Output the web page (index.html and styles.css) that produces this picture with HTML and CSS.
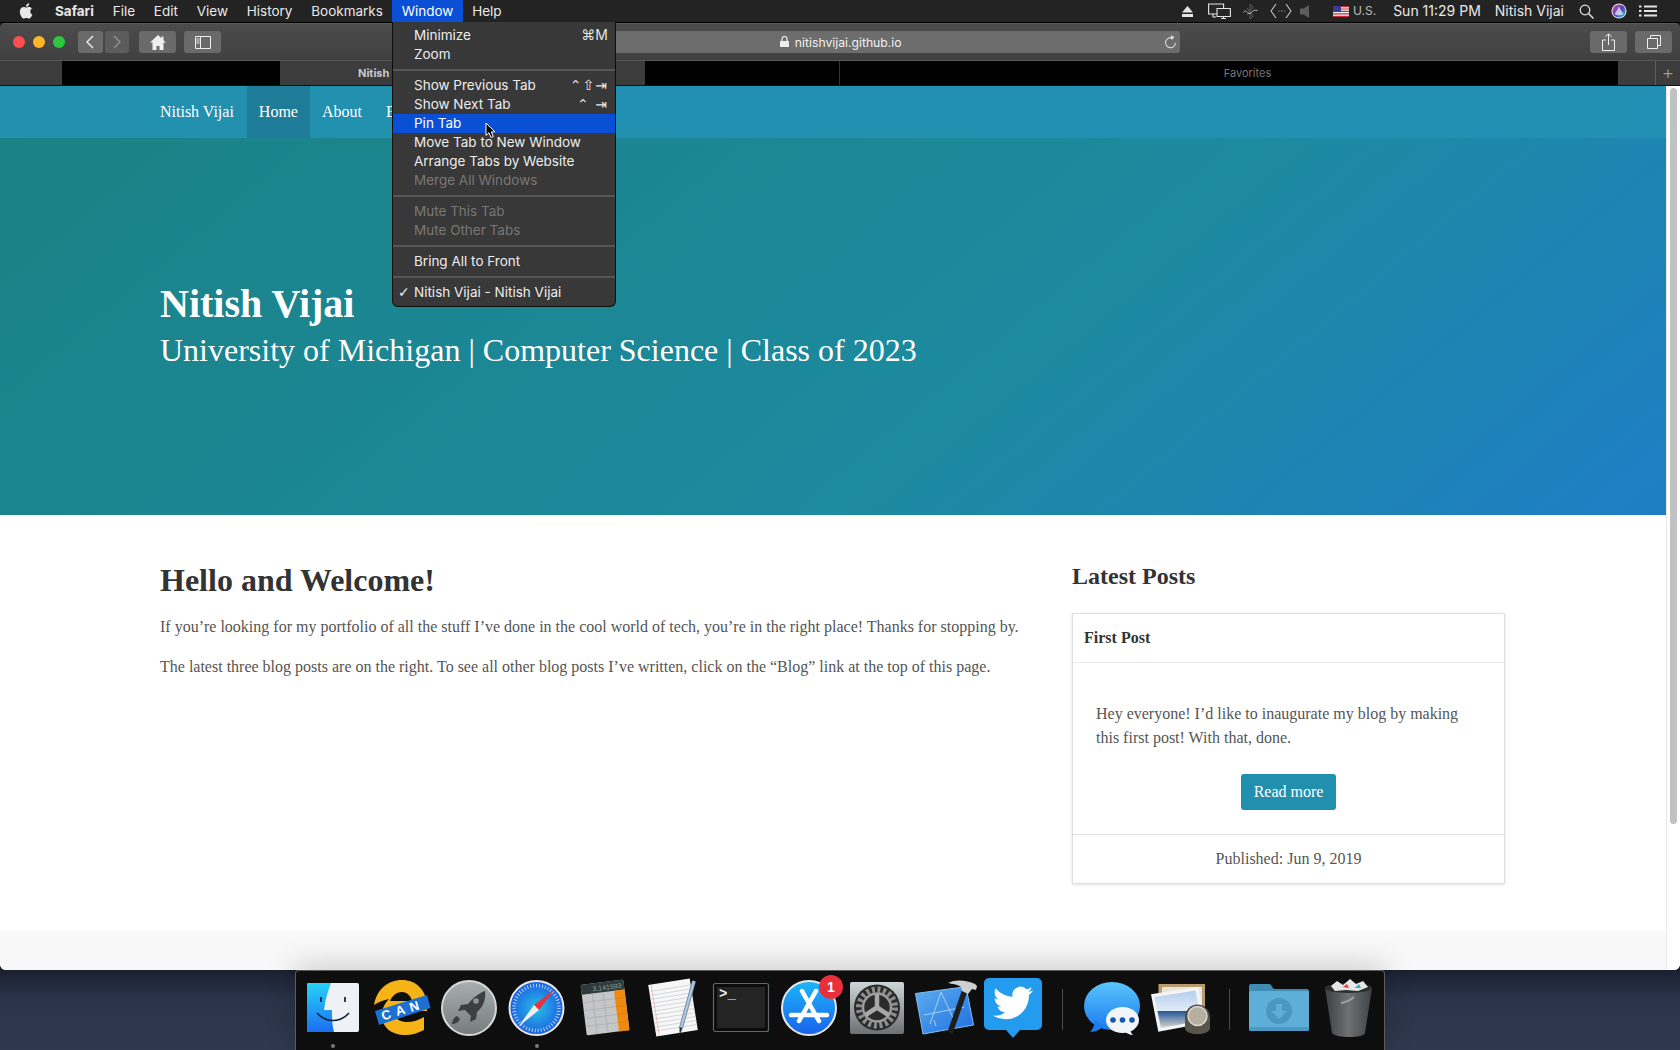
FILE: index.html
```html
<!DOCTYPE html>
<html lang="en">
<head>
  <meta charset="UTF-8" />
  <title>Nitish Vijai - Nitish Vijai</title>
  <link rel="stylesheet" href="styles.css">
</head>
<body>
<div class="desktop">

  <!-- Menu bar -->
  <div class="menubar">
    <div class="menubar-left">
      <span class="apple"><svg width="15" height="18" viewBox="2 0 20 24"><path fill="#e8e8e8" d="M17.05 12.54c-.03-2.6 2.12-3.85 2.22-3.91-1.21-1.77-3.09-2.01-3.76-2.04-1.6-.16-3.12.94-3.93.94-.81 0-2.06-.92-3.39-.89-1.74.03-3.35 1.01-4.25 2.57-1.81 3.14-.46 7.8 1.3 10.35.86 1.25 1.89 2.65 3.24 2.6 1.3-.05 1.79-.84 3.36-.84 1.57 0 2.01.84 3.39.81 1.4-.02 2.28-1.27 3.14-2.53.99-1.45 1.4-2.85 1.42-2.92-.03-.01-2.72-1.04-2.74-4.14zM14.47 4.9c.72-.87 1.2-2.08 1.07-3.29-1.03.04-2.28.69-3.02 1.55-.66.77-1.24 2-1.09 3.18 1.15.09 2.33-.58 3.04-1.44z"/></svg></span>
      <span class="menu-title app-name">Safari</span>
      <span class="menu-title">File</span>
      <span class="menu-title">Edit</span>
      <span class="menu-title">View</span>
      <span class="menu-title">History</span>
      <span class="menu-title">Bookmarks</span>
      <span class="menu-title open">Window</span>
      <span class="menu-title">Help</span>
    </div>
    <div class="menubar-right">
      <svg class="status eject" width="11" height="11" viewBox="0 0 11 11"><path fill="#e4e4e4" d="M5.5 0 11 6.5H0zM0 8h11v3H0z"/></svg>
      <svg class="status displays" width="23" height="16" viewBox="0 0 23 16"><g fill="#262626" stroke="#e4e4e4" stroke-width="1.1"><path d="M.6 1h15v10H.6zM5 11v3h3"/><path d="M9 5.5h13.4v8H9zM15.5 13.500v2M13 15.500h5"/></g></svg>
      <svg class="status bt" width="15" height="17" viewBox="0 0 15 17"><path fill="none" stroke="#5f5f5f" d="M7 1v15M7 1l3 3-6 8M7 16l3-3-6-8"/><path fill="none" stroke="#bdbdbd" d="M.5 9.500c2-3 3-1 4 0s2 2 4 0 3-3 6-2"/></svg>
      <svg class="status code" width="22" height="16" viewBox="0 0 22 16"><path fill="none" stroke="#c4c4c4" stroke-width="1.1" d="M6 1 1 8l5 7M16 1l5 7-5 7"/><path stroke="#8a8a8a" stroke-dasharray="1.500 1.500" d="M8 8h7"/></svg>
      <svg class="status volume" width="10" height="13" viewBox="0 0 10 13"><path fill="#5c5c5c" d="M0 3.500h3.500L9 0v13L3.500 9.500H0z"/></svg>
      <svg class="status flag" width="16" height="11" viewBox="0 0 16 11"><rect width="16" height="11" fill="#f2f2f2"/><path stroke="#c6303e" stroke-width="1.200" d="M0 .6h16M0 3h16M0 5.400h16M0 7.800h16M0 10.300h16"/><rect width="8" height="6" fill="#3b3b8f"/></svg>
      <span class="status-us">U.S.</span>
      <span class="status-time">Sun 11:29 PM</span>
      <span class="status-user">Nitish Vijai</span>
      <svg class="status search" width="15" height="15" viewBox="0 0 15 15"><circle cx="6" cy="6" r="4.800" fill="none" stroke="#e4e4e4" stroke-width="1.200"/><path stroke="#e4e4e4" stroke-width="1.500" d="m9.500 9.500 5 5"/></svg>
      <svg class="status siri" width="16" height="16" viewBox="0 0 16 16"><defs><linearGradient id="siriFill" x1="0" y1="0" x2="1" y2="1"><stop offset="0" stop-color="#d94fb0"/><stop offset=".5" stop-color="#5a3fb5"/><stop offset="1" stop-color="#2ac6d8"/></linearGradient></defs><circle cx="8" cy="8" r="7.600" fill="#e6e6e6"/><circle cx="8" cy="8" r="6.600" fill="url(#siriFill)"/><path fill="#dfe9f5" opacity=".8" d="M8 3.500c1.500 3 3 5.500 4.500 7.500-2.500 1.800-6.500 1.800-9 0C5 9 6.500 6.500 8 3.500z"/></svg>
      <svg class="status list" width="18" height="12" viewBox="0 0 18 12"><path stroke="#e4e4e4" stroke-width="1.800" d="M0 1.500h2.500M5 1.500h13M0 6h2.500M5 6h13M0 10.500h2.500M5 10.500h13"/></svg>
    </div>
  </div>

  <!-- Safari window -->
  <div class="window">
    <div class="toolbar">
      <div class="lights">
        <span class="light red"></span>
        <span class="light yellow"></span>
        <span class="light green"></span>
      </div>
      <div class="nav-btns">
        <span class="tool-btn back"><svg width="10" height="14" viewBox="0 0 10 14"><path fill="none" stroke="#e6e6e6" stroke-width="1.500" d="M8 1 2 7l6 6"/></svg></span>
        <span class="tool-btn back dim"><svg width="10" height="14" viewBox="0 0 10 14"><path fill="none" stroke="#8f8f8f" stroke-width="1.500" d="m2 1 6 6-6 6"/></svg></span>
      </div>
      <span class="tool-btn wide home-btn"><svg width="16" height="15" viewBox="0 0 16 15"><path fill="#eee" d="M8 0 0 7.500h2.500V15h4v-4h3v4h4V7.500H16l-2.500-2.300V1.500h-2V3.300z"/></svg></span>
      <span class="tool-btn wide"><svg width="16" height="13" viewBox="0 0 16 13"><path fill="none" stroke="#eee" d="M.5.500h15v12H.5zM5.500.5v12"/><path stroke="#eee" d="M1.500 3h3M1.500 5h3M1.500 7h3"/></svg></span>
      <div class="urlbar">
        <span class="url-text"><svg width="9" height="11" viewBox="0 0 9 11"><path fill="#eee" d="M0 5h9v6H0z"/><path fill="none" stroke="#eee" stroke-width="1.200" d="M2 5V3a2.500 2.500 0 0 1 5 0v2"/></svg> nitishvijai.github.io</span>
        <svg class="reload" width="13" height="14" viewBox="0 0 13 14"><path fill="none" stroke="#dcdcdc" stroke-width="1.100" d="M8.500 3.100A5 5 0 1 0 11.500 8"/><path fill="#dcdcdc" d="M7 0v5l3.500-2.500z"/></svg>
      </div>
      <span class="tool-btn wide"><svg width="13" height="18" viewBox="0 0 13 18"><path fill="none" stroke="#eee" d="M4 7H.5v10.500h12V7H9M6.500 12V1M3.500 3.800l3-3 3 3"/></svg></span>
      <span class="tool-btn wide"><svg width="14" height="14" viewBox="0 0 14 14"><path fill="none" stroke="#eee" d="M.5 3.500h10v10H.5zM3.500 3.500v-3h10v10h-3"/></svg></span>
    </div>

    <div class="tabbar">
      <div class="tab tab-edge"></div>
      <div class="tab hidden-tab first"></div>
      <div class="tab tab-current">Nitish Vijai - Nitish Vijai</div>
      <div class="tab hidden-tab second"></div>
      <div class="tab hidden-tab favorites">Favorites</div>
      <div class="tab tab-gap"></div>
      <div class="tab tab-add">+</div>
    </div>

    <div class="viewport">
      <div class="page">
        <div class="site-nav">
          <span class="site-brand">Nitish Vijai</span>
          <span class="site-link active">Home</span>
          <span class="site-link">About</span>
          <span class="site-link">Experience</span>
        </div>
        <div class="hero">
          <h1>Nitish Vijai</h1>
          <p>University of Michigan | Computer Science | Class of 2023</p>
        </div>
        <div class="content">
          <div class="main-col">
            <h2>Hello and Welcome!</h2>
            <p>If you’re looking for my portfolio of all the stuff I’ve done in the cool world of tech, you’re in the right place! Thanks for stopping by.</p>
            <p>The latest three blog posts are on the right. To see all other blog posts I’ve written, click on the “Blog” link at the top of this page.</p>
          </div>
          <div class="side-col">
            <h3>Latest Posts</h3>
            <div class="card">
              <div class="card-head">First Post</div>
              <div class="card-body">
                <p>Hey everyone! I’d like to inaugurate my blog by making this first post! With that, done.</p>
                <div class="btn-row"><span class="read-btn">Read more</span></div>
              </div>
              <div class="card-foot">Published: Jun 9, 2019</div>
            </div>
          </div>
        </div>
        <div class="site-footer"></div>
      </div>
      <div class="scrollbar"><div class="thumb"></div></div>
    </div>
  </div>

  <!-- Dock -->
  <div class="dock">
    <div class="dock-item running">
      <svg width="60" height="60" viewBox="0 0 60 60"><defs><linearGradient id="finderL" x1="0" y1="0" x2="0" y2="1"><stop offset="0" stop-color="#27d2fb"/><stop offset="1" stop-color="#1b6ef0"/></linearGradient></defs><rect x="4" y="5" width="52" height="49" rx="2" fill="#eef2f6"/><path fill="url(#finderL)" d="M6 5h22c-3 8-6 17-7 27h8c0 7 0 15 2 22H6a2 2 0 0 1-2-2V7a2 2 0 0 1 2-2z"/><path stroke="#1a2a44" stroke-width="1.800" d="M18 19v5M42 19v5"/><path fill="none" stroke="#12233e" stroke-width="1.600" d="M14 35c9 10 23 10 32 0"/></svg>
    </div>
    <div class="dock-item">
      <svg width="60" height="60" viewBox="0 0 60 60"><path fill="#f5b316" d="M3 27C6 11 17 2 31 2c14 0 25 10 25 27v4H22c1 7 6 11 14 11 6 0 12-2 17-5v13c-6 3-12 5-19 5-14 0-22-8-23-17-1-7 2-14 7-19C13 22 7 24 3 27z"/><path fill="#0e0e0e" d="M19 23c2-5 6-9 12-9 5 0 9 4 10 9z"/><path fill="#1c70d2" d="M4 33 56 17l3.500 13L8 47z"/><g class="can-text" fill="#fff"><text x="12" y="42.500" transform="rotate(-17 12 42.500)">C</text><text x="26" y="38" transform="rotate(-17 26 38)">A</text><text x="40" y="34" transform="rotate(-17 40 34)">N</text></g></svg>
    </div>
    <div class="dock-item">
      <svg width="60" height="60" viewBox="0 0 60 60"><defs><linearGradient id="padBg" x1="0" y1="0" x2="0" y2="1"><stop offset="0" stop-color="#a9aeb0"/><stop offset="1" stop-color="#767b7c"/></linearGradient></defs><circle cx="30" cy="30" r="27" fill="url(#padBg)" stroke="#d6d8d8" stroke-width="2"/><path fill="#3d3f41" d="M46 13c1 7-1 15-8 21l-1 7-6 3 1-6-6-6-7 1 3-6 7-1c6-7 11-11 17-13z"/><path fill="#3d3f41" d="M18 38c-3 1-5 5-5 8 3 0 7-2 8-5z"/><circle cx="37" cy="23" r="2.800" fill="#8e9395"/></svg>
    </div>
    <div class="dock-item running">
      <svg width="60" height="60" viewBox="0 0 60 60"><defs><radialGradient id="safariBg"><stop offset="0" stop-color="#27c0e8"/><stop offset="1" stop-color="#1c5fe0"/></radialGradient></defs><circle cx="29.500" cy="30" r="27" fill="url(#safariBg)" stroke="#e8e8e8" stroke-width="2"/><circle cx="29.500" cy="30" r="22.500" fill="none" stroke="#d6ecfb" stroke-width="3.500" stroke-dasharray=".8 2.200"/><path fill="#e8333a" d="m48 11-21 16 5 5z"/><path fill="#eef0f2" d="m11 49 21-17-5-5z"/></svg>
    </div>
    <div class="dock-item">
      <svg width="60" height="60" viewBox="0 0 60 60"><g transform="rotate(-7 30 29.500)"><rect x="8.500" y="4" width="43" height="51" rx="1.500" fill="#c4c6c8"/><path fill="#2e3a3c" d="M8.500 5.500A1.500 1.500 0 0 1 10 4h40a1.500 1.500 0 0 1 1.500 1.500V14h-43z"/><rect x="41" y="14" width="10.500" height="41" fill="#ef8a10"/><path stroke="#a4a6a8" stroke-width=".6" d="M8.500 22h32M8.500 30h32M8.500 38h32M8.500 46h32M19 14v41M30 14v41"/><path stroke="#d27a10" stroke-width=".6" d="M41 22h10.500M41 30h10.500M41 38h10.500M41 46h10.500"/><text class="calc-text" x="49" y="12" text-anchor="end">3.141593</text></g></svg>
    </div>
    <div class="dock-item">
      <svg width="60" height="60" viewBox="0 0 60 60"><g transform="rotate(-9 30 29.500)"><rect x="9" y="3.500" width="42" height="52" fill="#f7f7f7"/><path stroke="#c8ccd0" stroke-width=".7" d="M9 10h42M9 14h42M9 18h42M9 22h42M9 26h42M9 30h42M9 34h42M9 38h42M9 42h42M9 46h42M9 50h42"/><path stroke="#eab4b4" stroke-width=".7" d="M12 3.500v52"/></g><path stroke="#6b7f92" stroke-width="4" d="M51 3 38 50"/><path stroke="#a9c6e2" stroke-width="2.500" d="M51 3 38 50"/><path fill="#333" d="m36.500 49 3 1-3 8z"/></svg>
    </div>
    <div class="dock-item">
      <svg width="60" height="60" viewBox="0 0 60 60"><rect x="2.500" y="5.500" width="55" height="48" rx="2" fill="#0c0c0c" stroke="#5e676a" stroke-width="1.200"/><rect x="6" y="9" width="48" height="41" fill="#242424"/><text class="term-text" x="8" y="20">&gt;_</text></svg>
    </div>
    <div class="dock-item">
      <svg width="60" height="60" viewBox="0 0 60 60"><defs><linearGradient id="storeBg" x1="0" y1="0" x2="0" y2="1"><stop offset="0" stop-color="#1cb6f8"/><stop offset="1" stop-color="#1a62ee"/></linearGradient></defs><circle cx="30" cy="30" r="27" fill="url(#storeBg)" stroke="#e8e8e8" stroke-width="2"/><path fill="none" stroke="#fff" stroke-width="4.500" stroke-linecap="round" d="M23 13l17 30M37 13 20 43M12 37h36"/></svg>
      <span class="badge">1</span>
    </div>
    <div class="dock-item">
      <svg width="60" height="60" viewBox="0 0 60 60"><defs><linearGradient id="prefBg" x1="0" y1="0" x2="0" y2="1"><stop offset="0" stop-color="#cdd6d8"/><stop offset="1" stop-color="#6e7072"/></linearGradient></defs><rect x="3" y="4" width="54" height="52" rx="2" fill="url(#prefBg)"/><circle cx="30" cy="29.500" r="23" fill="#2b2b2b"/><circle cx="30" cy="29.500" r="18" fill="none" stroke="#8d8d8d" stroke-width="6" stroke-dasharray="3 2.650"/><circle cx="30" cy="29.500" r="14" fill="#2b2b2b" stroke="#9b9b9b" stroke-width="2.500"/><path stroke="#a8a8a8" stroke-width="4.500" d="M30 29.500V16M30 29.500 18.500 37M30 29.500 41.500 37"/></svg>
    </div>
    <div class="dock-item">
      <svg width="60" height="60" viewBox="0 0 60 60"><defs><linearGradient id="xcodeBg" x1="0" y1="0" x2="1" y2="1"><stop offset="0" stop-color="#5eaef0"/><stop offset="1" stop-color="#1f6fe0"/></linearGradient></defs><path fill="url(#xcodeBg)" stroke="#7fc0f5" d="M.5 15.500 51 8.700 58.500 47 8 56z"/><path fill="none" stroke="#a6d2f6" stroke-width="1" d="M26 14 15 46M26 14l13 28M9 37l40-8M21 48l-2-6"/><path stroke="#1e1e1e" stroke-width="5.500" d="M50 12 35 55"/><path fill="#cfcfcf" d="M33 5C40 1 52 2 60 6l2 2-1 4-4-1-4 5-6-3-1-4c-4-3-9-3-13-4z"/></svg>
    </div>
    <div class="dock-item">
      <svg width="60" height="60" viewBox="0 0 60 60"><path fill="#239cf0" d="M6 0h48a5 5 0 0 1 5 5v42a5 5 0 0 1-5 5H37l-7 8-7-8H6a5 5 0 0 1-5-5V5a5 5 0 0 1 5-5z"/><svg x="10" y="5" width="40" height="40" viewBox="0 0 24 24"><path fill="#fff" d="M23.950 4.570a10 10 0 0 1-2.820.77 4.960 4.960 0 0 0 2.160-2.720c-.95.55-2 .95-3.120 1.180a4.920 4.920 0 0 0-8.380 4.480C7.690 8.100 4.070 6.130 1.640 3.160a4.820 4.820 0 0 0-.66 2.480c0 1.710.87 3.210 2.190 4.100a4.900 4.900 0 0 1-2.230-.61v.06a4.920 4.920 0 0 0 3.950 4.830 5 5 0 0 1-2.210.08 4.940 4.940 0 0 0 4.600 3.420A9.870 9.870 0 0 1 0 19.540a14 14 0 0 0 7.560 2.210c9.050 0 14-7.500 14-13.980 0-.21 0-.42-.02-.63a9.940 9.940 0 0 0 2.460-2.550z"/></svg></svg>
    </div>
    <div class="dock-sep"></div>
    <div class="dock-item">
      <svg width="60" height="60" viewBox="0 0 60 60"><defs><linearGradient id="msgBg" x1="0" y1="0" x2="0" y2="1"><stop offset="0" stop-color="#5ac4fb"/><stop offset="1" stop-color="#1a7cf0"/></linearGradient></defs><ellipse cx="30" cy="28" rx="28" ry="24" fill="url(#msgBg)"/><path fill="#1a7cf0" d="M13 42c0 5-3 10-5 12 5 0 11-3 14-6z"/><ellipse cx="40.500" cy="42" rx="16.500" ry="13" fill="#f2f5f8"/><path fill="#f2f5f8" d="M48 50c0 3 1 5 3 7-3 0-7-2-9-4z"/><g fill="#1757a8"><circle cx="31" cy="42" r="2.800"/><circle cx="40.500" cy="42" r="2.800"/><circle cx="50" cy="42" r="2.800"/></g></svg>
    </div>
    <div class="dock-item">
      <svg width="60" height="60" viewBox="0 0 60 60"><defs><linearGradient id="prevSky" x1="0" y1="0" x2="0" y2="1"><stop offset="0" stop-color="#b4cdee"/><stop offset=".55" stop-color="#e2ecf6"/><stop offset=".56" stop-color="#2a5a9a"/><stop offset="1" stop-color="#d8d6ce"/></linearGradient></defs><rect x="8.500" y="6" width="46.500" height="40" fill="#b89c70"/><rect x="12" y="9" width="40" height="34" fill="#e8e4d8"/><path fill="#f4f4f4" d="M1 16.300 48.300 8.700 55 45 8.300 53.700z"/><path fill="url(#prevSky)" d="m4.500 19 41-6.500 5.500 30-40 7.500z"/><circle cx="47.500" cy="39" r="12.500" fill="#4e4a44"/><path fill="#5a554c" d="M35 39h25v11a12 6 0 0 1-25 0z"/><circle cx="47.500" cy="38" r="9.500" fill="#b7b0a0" stroke="#d8d8d4" stroke-width="1.500"/></svg>
    </div>
    <div class="dock-sep"></div>
    <div class="dock-item">
      <svg width="60" height="60" viewBox="0 0 60 60"><path fill="#3f8db5" d="M2 6h18c3 0 3 5 6 5h32a2 2 0 0 1 2 2v10H0V8a2 2 0 0 1 2-2z"/><rect y="13" width="60" height="40" rx="2" fill="#5dafd8"/><rect y="49" width="60" height="4" rx="2" fill="#4a9ac4"/><circle cx="30" cy="33" r="13" fill="#4a97bf"/><path fill="#5dafd8" d="M27 26h6v7h5l-8 8-8-8h5z"/></svg>
    </div>
    <div class="dock-item">
      <svg width="60" height="60" viewBox="0 0 60 60"><defs><linearGradient id="trashBg" x1="0" y1="0" x2="1" y2="0"><stop offset="0" stop-color="#3c3f42"/><stop offset=".5" stop-color="#6d7174"/><stop offset="1" stop-color="#3f4245"/></linearGradient></defs><path fill="url(#trashBg)" d="M8 10h47l-7 45c-1 3-9 4-16 4s-15-1-17-4z"/><ellipse cx="31.500" cy="10" rx="23.500" ry="5" fill="#2c2e30"/><path fill="#e6e6e6" d="M14 8l6-5 6 4 7-6 6 5 7-3 5 6-10 4-12-1-11 1z"/><path fill="#e23b3b" d="m26 9 4-3 2 4z"/><path fill="#2ab0c8" d="m38 10 4-4 2 4z"/><path fill="none" stroke="#9b9fa2" stroke-width="2" d="M24 25c5-1 10-3 13-6"/></svg>
    </div>
  </div>

  <!-- Open Window menu -->
  <div class="menu">
    <div class="menu-row"><span>Minimize</span><span class="keys"><span class="key-glyph">⌘</span>M</span></div>
    <div class="menu-row"><span>Zoom</span></div>
    <div class="menu-sep"></div>
    <div class="menu-row"><span>Show Previous Tab</span><span class="keys key-glyph key-spaced">⌃⇧⇥</span></div>
    <div class="menu-row"><span>Show Next Tab</span><span class="keys key-glyph key-spaced">⌃ ⇥</span></div>
    <div class="menu-row selected"><span>Pin Tab</span></div>
    <div class="menu-row"><span>Move Tab to New Window</span></div>
    <div class="menu-row"><span>Arrange Tabs by Website</span></div>
    <div class="menu-row disabled"><span>Merge All Windows</span></div>
    <div class="menu-sep"></div>
    <div class="menu-row disabled"><span>Mute This Tab</span></div>
    <div class="menu-row disabled"><span>Mute Other Tabs</span></div>
    <div class="menu-sep"></div>
    <div class="menu-row"><span>Bring All to Front</span></div>
    <div class="menu-sep"></div>
    <div class="menu-row checked"><span>Nitish Vijai - Nitish Vijai</span></div>
  </div>

  <svg class="cursor" width="13" height="17" viewBox="0 0 13 17"><path fill="#000" stroke="#fff" d="M1 1v12.500l3-2.800 2 4.800 2.300-1-2-4.600H10z"/></svg>
</div>
</body>
</html>
```

FILE: styles.css
```css
* {
  box-sizing: border-box;
}

html,
body {
  margin: 0;
  padding: 0;
  overflow: hidden;
}

.desktop {
  position: relative;
  width: 1680px;
  height: 1050px;
  display: flex;
  flex-direction: column;
  overflow: hidden;
  background: linear-gradient(180deg, #1b2031 970px, #2b344a 1000px, #2f384e 1050px);
  font-family: "Inter", "Noto Sans", sans-serif;
}

/* menu bar */
.menubar {
  height: 23px;
  flex: none;
  display: flex;
  justify-content: space-between;
  background: #232323;
  border-bottom: 1px solid #000;
  color: #e8e8e8;
  font-size: 14px;
  line-height: 22px;
}

.menubar-left,
.menubar-right {
  display: flex;
  align-items: center;
}

.apple {
  display: flex;
  margin-left: 19px;
  margin-right: 11.600px;
}

.menu-title {
  height: 22px;
  padding: 0 9.400px;
  font-size: 13.500px;
}

.app-name {
  font-weight: 700;
}

.menu-title.open {
  background: #0a50d6;
  color: #fff;
}

.menubar-right {
  padding-right: 23px;
}

.status {
  flex: none;
}

.eject { margin-right: 15px; }
.displays { margin-right: 12px; }
.bt { margin-right: 12px; }
.code { margin-right: 8px; }
.volume { margin-right: 23px; }
.flag { margin-right: 4px; }
.search { margin-right: 17px; margin-left: 15px; }
.siri { margin-right: 12px; }

.status-us {
  font-size: 12px;
  color: #bdbdbd;
  margin-right: 17px;
}

.status-time {
  margin-right: 14px;
}

/* browser window */
.window {
  height: 947px;
  flex: none;
  display: flex;
  flex-direction: column;
  background: #424242;
  border-radius: 5px 5px 6px 6px;
  overflow: hidden;
}

.toolbar {
  height: 37px;
  flex: none;
  display: flex;
  align-items: center;
  padding: 0 8px 0 13px;
  background: linear-gradient(180deg, #4c4c4c, #404040);
  border-top: 1px solid #5a5a5a;
}

.lights {
  display: flex;
  gap: 8px;
  margin-right: 13px;
}

.light {
  width: 12px;
  height: 12px;
  border-radius: 50%;
}

.red { background: #fc4f4f; }
.yellow { background: #fdb52c; }
.green { background: #2cc83f; }

.tool-btn {
  flex: none;
  height: 22px;
  display: flex;
  align-items: center;
  justify-content: center;
  background: #6a6a6a;
  border-radius: 3px;
}

.nav-btns {
  display: flex;
  gap: 2px;
  margin-right: 10px;
}

.back {
  width: 24.500px;
}

.dim {
  background: #5c5c5c;
}

.wide {
  width: 37px;
}

.home-btn {
  margin-right: 8px;
}

.urlbar {
  position: relative;
  flex: none;
  width: 678px;
  height: 22px;
  margin-left: 281px;
  margin-right: 410px;
  display: flex;
  align-items: center;
  justify-content: center;
  background: #6d6d6d;
  border-radius: 3px;
  color: #f0f0f0;
  font-size: 12.200px;
}

.url-text svg {
  margin-right: 2px;
}

.reload {
  position: absolute;
  right: 3px;
  top: 4px;
}

.toolbar > .tool-btn:last-child {
  margin-left: 8px;
}

.tabbar {
  height: 26px;
  flex: none;
  display: flex;
  border-top: 1px solid #5a5a5a;
  border-bottom: 1px solid #111;
  background: #3c3c3c;
  font-size: 11px;
  line-height: 24px;
}

.tab {
  height: 24px;
}

.tab-edge {
  width: 62px;
}

.hidden-tab {
  background: #000;
}

.first {
  width: 218px;
}

.second {
  width: 195px;
  border-right: 1px solid #333;
}

.tab-current {
  width: 365px;
  padding-left: 78px;
  color: #c8c8c8;
  font-weight: 700;
}

.favorites {
  width: 778px;
  padding-left: 37px;
  text-align: center;
  color: #777;
}

.tab-gap {
  width: 37px;
}

.tab-add {
  width: 25px;
  border-left: 1px solid #5e5e5e;
  text-align: center;
  color: #9a9a9a;
  font-size: 19px;
  font-weight: 300;
}

/* page */
.viewport {
  flex: 1;
  min-height: 0;
  display: flex;
  background: #fff;
}

.page {
  flex: 1;
  min-width: 0;
  display: flex;
  flex-direction: column;
  font-family: "Liberation Serif", serif;
  color: #555;
}

.site-nav {
  height: 52px;
  flex: none;
  display: flex;
  padding-left: 160px;
  background: linear-gradient(100deg, #2290ae, #2190b4);
  color: #fff;
  font-size: 16px;
  line-height: 52px;
}

.site-brand {
  margin-right: 13px;
}

.site-link {
  padding: 0 12px;
}

.site-link.active {
  background: #1f7c99;
}

.hero {
  height: 377px;
  flex: none;
  padding: 143px 160px 0;
  background: linear-gradient(140deg, #1b8285, #1c8a9f 60%, #1f7fc6);
  color: #fff;
}

.hero h1 {
  margin: 0 0 3px;
  font-size: 40px;
  line-height: 46px;
}

.hero p {
  margin: 0;
  font-size: 32px;
  line-height: 40px;
}

.content {
  flex: 1;
  display: flex;
  padding-left: 160px;
}

.main-col {
  width: 912px;
  padding-top: 44px;
}

.main-col h2 {
  margin: 0 0 14px;
  font-size: 32px;
  line-height: 42px;
  color: #333;
}

.main-col p {
  margin: 0 0 16px;
  font-size: 16px;
  line-height: 24px;
}

.side-col {
  width: 433px;
  padding-top: 43px;
}

.side-col h3 {
  margin: 0 0 19px;
  font-size: 24px;
  line-height: 36px;
  color: #333;
}

.card {
  border: 1px solid #dfdfdf;
  box-shadow: 0 1px 3px rgba(0, 0, 0, 0.12);
  font-size: 16px;
}

.card-head {
  height: 49px;
  padding: 0 11px;
  border-bottom: 1px solid #e8e8e8;
  font-weight: 700;
  line-height: 47px;
  color: #333;
}

.card-body {
  height: 171px;
  padding: 39px 23px 0;
}

.card-body p {
  margin: 0 0 24px;
  line-height: 24px;
}

.btn-row {
  display: flex;
  justify-content: center;
}

.read-btn {
  width: 95px;
  height: 36px;
  background: #2190ae;
  border-radius: 3px;
  color: #fff;
  text-align: center;
  line-height: 36px;
}

.card-foot {
  height: 49px;
  border-top: 1px solid #dfdfdf;
  text-align: center;
  line-height: 47px;
}

.site-footer {
  height: 39px;
  flex: none;
  background: #f8f8f8;
}

.scrollbar {
  width: 14px;
  flex: none;
  padding: 2px 3px 0;
  border-left: 1px solid #e8e8e8;
  background: #fff;
}

.thumb {
  height: 736px;
  background: #c1c1c1;
  border-radius: 4px;
}

/* dock */
.dock {
  position: relative;
  width: 1090px;
  height: 80px;
  margin-left: 295px;
  flex: none;
  display: flex;
  align-items: flex-start;
  padding: 7px 0 0 7px;
  gap: 8px;
  background: #0e0e0e;
  border: 1px solid #5c5c5c;
  border-bottom: 0;
  border-radius: 4px 4px 0 0;
  box-shadow: 0 -4px 30px rgba(0, 0, 0, 0.18);
}

.dock-item {
  position: relative;
  width: 60px;
  height: 60px;
  flex: none;
}

.dock-item svg {
  display: block;
  overflow: visible;
}

.dock-item.running::after {
  content: "";
  position: absolute;
  left: 28px;
  top: 66px;
  width: 4px;
  height: 4px;
  border-radius: 50%;
  background: #7a7a7a;
}

.dock-sep {
  width: 1px;
  height: 41px;
  margin: 11px 11px 0;
  flex: none;
  background: #4c4c4c;
}

.can-text {
  font-family: "Liberation Sans", sans-serif;
  font-size: 13px;
  font-weight: 700;
}

.calc-text {
  font-family: "Liberation Sans", sans-serif;
  font-size: 7px;
  fill: #8fa0a0;
}

.term-text {
  font-family: "Liberation Mono", monospace;
  font-size: 14px;
  font-weight: 700;
  fill: #eee;
}

.badge {
  position: absolute;
  left: 40px;
  top: -3px;
  width: 24px;
  height: 24px;
  border-radius: 50%;
  background: #ea2f3c;
  color: #fff;
  font-family: "Liberation Sans", sans-serif;
  font-size: 14px;
  font-weight: 700;
  line-height: 24px;
  text-align: center;
}

/* open menu */
.menu {
  position: absolute;
  left: 392px;
  top: 22px;
  width: 224px;
  height: 285px;
  padding-top: 4px;
  background: #383838;
  border: 1px solid #0c0c0c;
  border-top: 0;
  border-radius: 0 0 6px 6px;
  color: #ededed;
  font-size: 13.500px;
}

.menu-row {
  height: 19px;
  padding: 0 7px 0 21px;
  display: flex;
  justify-content: space-between;
  line-height: 18.500px;
  white-space: nowrap;
}

.menu-row.selected {
  background: #0a50d6;
  color: #fff;
}

.menu-row.disabled {
  color: #777;
}

.menu-row.checked {
  position: relative;
}

.menu-row.checked::before {
  content: "✓";
  position: absolute;
  left: 5px;
  font-family: "DejaVu Sans", sans-serif;
  font-size: 14px;
  font-weight: 700;
}

.menu-sep {
  height: 2px;
  margin: 5px 0;
  background: #565656;
}

.keys {
  color: #e4e4e4;
  font-size: 14px;
}

.key-glyph {
  font-family: "DejaVu Sans", sans-serif;
  font-size: 14px;
}

.key-spaced {
  letter-spacing: 1px;
}

.cursor {
  position: absolute;
  left: 485px;
  top: 122px;
}
```
